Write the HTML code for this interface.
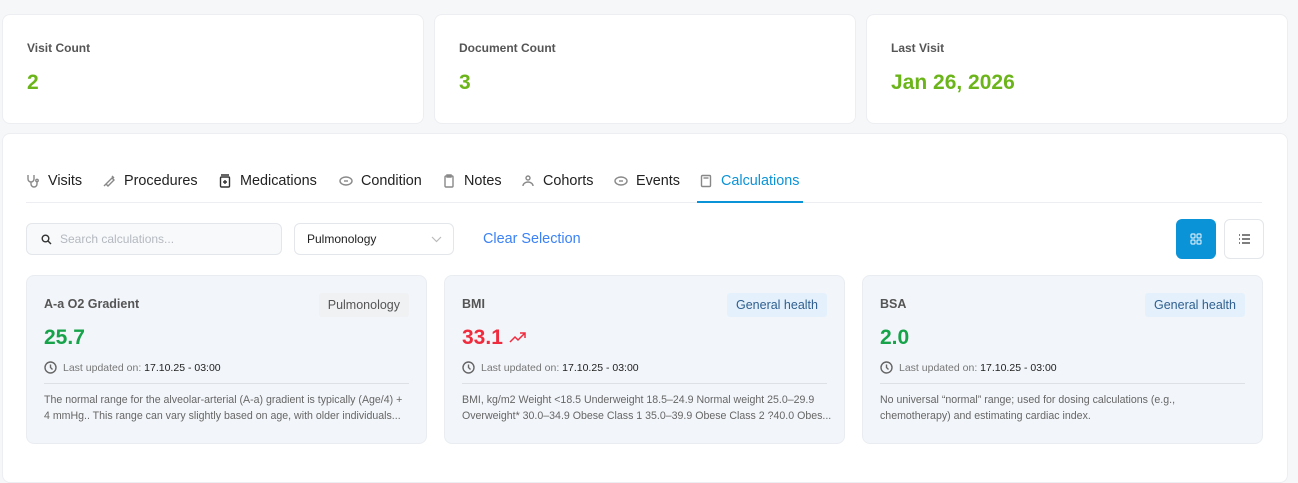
<!DOCTYPE html><html><head><style>
*{box-sizing:border-box;margin:0;padding:0}
body{width:1298px;height:474px;background:#f6f7f9;font-family:"Liberation Sans",sans-serif;position:relative;overflow:hidden;color:#333}
.a{position:absolute}
.top{background:#fff;border:1px solid #eceef1;border-radius:8px;top:14px;height:110px}
.top .l{position:absolute;left:24px;top:26px;font-size:12px;font-weight:bold;color:#555}
.top .v{position:absolute;left:24px;top:56px;font-size:21px;font-weight:bold;color:#6bb51a}
.panel{left:2px;top:133px;width:1286px;height:350px;background:#fff;border:1px solid #eceef1;border-radius:8px}
.tab{top:173px;font-size:14.4px;color:#222;display:flex;align-items:center;gap:8px}
.tab svg{width:14px;height:14px;fill:none;stroke:#888;stroke-width:1.4}
.card{top:275px;height:169px;width:401px;background:#f2f5f9;border-radius:8px;border:1px solid #e9edf2}
.card .t{position:absolute;left:17px;top:21px;font-size:12.5px;font-weight:bold;color:#555}
.card .b{position:absolute;right:17px;top:17px;height:24px;padding:0 9px;line-height:24px;font-size:12.5px;border-radius:3px}
.card .n{position:absolute;left:17px;top:50px;font-size:21px;font-weight:bold;color:#16a34a}
.card .u{position:absolute;left:17px;top:85px;font-size:10.5px;color:#777;display:flex;align-items:center;gap:6px}
.card .u b{font-weight:normal;color:#222}
.card .hr{position:absolute;left:17px;right:17px;top:107px;border-top:1px solid #dde1e6}
.card .d{position:absolute;left:17px;top:116px;font-size:10.6px;line-height:16px;color:#666;white-space:nowrap}
</style></head><body>
<div class="a top" style="left:2px;width:422px"><div class="l">Visit Count</div><div class="v">2</div></div>
<div class="a top" style="left:434px;width:422px"><div class="l">Document Count</div><div class="v">3</div></div>
<div class="a top" style="left:866px;width:422px"><div class="l">Last Visit</div><div class="v">Jan 26, 2026</div></div>
<div class="a panel"></div>
<div class="a tab" style="left:26px"><svg viewBox="0 0 14 14"><path d="M2 1v4a3 3 0 006 0V1M5 8v2a3 3 0 006 0V8"/><circle cx="11" cy="6.5" r="1.2"/></svg>Visits</div>
<div class="a tab" style="left:102px"><svg viewBox="0 0 14 14"><path d="M2 12l3-3M4 10l6-6 2 2-6 6zM10 2l2 2"/></svg>Procedures</div>
<div class="a tab" style="left:218px"><svg viewBox="0 0 14 14" style="stroke:#333"><rect x="2.5" y="3" width="9" height="10" rx="1"/><path d="M3 1h8M7 6v4M5 8h4"/></svg>Medications</div>
<div class="a tab" style="left:339px"><svg viewBox="0 0 14 14"><ellipse cx="7" cy="7" rx="6" ry="4"/><path d="M5 7h4"/></svg>Condition</div>
<div class="a tab" style="left:442px"><svg viewBox="0 0 14 14"><rect x="3" y="2" width="8" height="11" rx="1"/><path d="M5 1h4v2H5z"/></svg>Notes</div>
<div class="a tab" style="left:521px"><svg viewBox="0 0 14 14"><circle cx="7" cy="4" r="2"/><path d="M2 12a5 4 0 0110 0"/></svg>Cohorts</div>
<div class="a tab" style="left:614px"><svg viewBox="0 0 14 14"><ellipse cx="7" cy="7" rx="6" ry="4"/><path d="M5 7h4"/></svg>Events</div>
<div class="a tab" style="left:699px;color:#0b93d8"><svg viewBox="0 0 14 14"><rect x="2.5" y="1.5" width="9" height="11" rx="1"/><path d="M4.5 4h5"/></svg>Calculations</div>
<div class="a" style="left:26px;top:202px;width:1236px;border-top:1px solid #eceef1"></div>
<div class="a" style="left:697px;top:201px;width:106px;height:2px;background:#0b93d8"></div>
<div class="a" style="left:26px;top:223px;width:256px;height:32px;border:1px solid #e3e6ea;border-radius:6px;background:#f7f9fb;font-size:12px;color:#b5b9bf;line-height:30px;padding-left:33px">Search calculations...
<svg class="a" style="left:14px;top:10px" width="11" height="11" viewBox="0 0 11 11" fill="none" stroke="#333" stroke-width="1.4"><circle cx="4.5" cy="4.5" r="3.3"/><path d="M7 7l3 3"/></svg></div>
<div class="a" style="left:294px;top:223px;width:160px;height:32px;border:1px solid #e3e6ea;border-radius:6px;background:#fff;font-size:12px;color:#222;line-height:30px;padding-left:12px">Pulmonology
<svg class="a" style="left:136px;top:12px" width="11" height="7" viewBox="0 0 11 7" fill="none" stroke="#bbb" stroke-width="1.2"><path d="M1 1l4.5 4.5L10 1"/></svg></div>
<div class="a" style="left:483px;top:231px;font-size:14.4px;color:#3b82f6">Clear Selection</div>
<div class="a" style="left:1176px;top:219px;width:40px;height:40px;border-radius:6px;background:#0b93d8"><svg class="a" style="left:14px;top:14px" width="12" height="12" viewBox="0 0 12 12" fill="none" stroke="#cfe9f8" stroke-width="1.2"><rect x="1" y="1" width="4" height="4" rx="1"/><rect x="7" y="1" width="4" height="4" rx="1"/><rect x="1" y="7" width="4" height="4" rx="1"/><rect x="7" y="7" width="4" height="4" rx="1"/></svg></div>
<div class="a" style="left:1224px;top:219px;width:40px;height:40px;border-radius:6px;border:1px solid #e3e6ea;background:#fff"><svg class="a" style="left:13px;top:13px" width="13" height="12" viewBox="0 0 13 12" fill="none" stroke="#333" stroke-width="1.3"><path d="M1 2h1M4 2h8M1 6h1M4 6h8M1 10h1M4 10h8"/></svg></div>

<div class="a card" style="left:26px"><div class="t">A-a O2 Gradient</div><div class="b" style="background:#f0f1f3;color:#555">Pulmonology</div><div class="n">25.7</div>
<div class="u"><svg width="13" height="13" viewBox="0 0 13 13" fill="none" stroke="#666" stroke-width="1.4"><circle cx="6.5" cy="6.5" r="5.5"/><path d="M6.5 3.5v3l2 2"/></svg><span>Last updated on: <b>17.10.25 - 03:00</b></span></div><div class="hr"></div>
<div class="d">The normal range for the alveolar-arterial (A-a) gradient is typically (Age/4) +<br>4 mmHg.. This range can vary slightly based on age, with older individuals...</div></div>

<div class="a card" style="left:444px"><div class="t">BMI</div><div class="b" style="background:#e4f1fc;color:#2f5f8f">General health</div><div class="n" style="color:#ef2b3d">33.1 <svg width="18" height="12" viewBox="0 0 18 12" fill="none" stroke="#ef2b3d" stroke-width="1.5"><path d="M1 10l5-5 3 3 7-7M11 1h5v5"/></svg></div>
<div class="u"><svg width="13" height="13" viewBox="0 0 13 13" fill="none" stroke="#666" stroke-width="1.4"><circle cx="6.5" cy="6.5" r="5.5"/><path d="M6.5 3.5v3l2 2"/></svg><span>Last updated on: <b>17.10.25 - 03:00</b></span></div><div class="hr"></div>
<div class="d">BMI, kg/m2 Weight &lt;18.5 Underweight 18.5–24.9 Normal weight 25.0–29.9<br>Overweight* 30.0–34.9 Obese Class 1 35.0–39.9 Obese Class 2 ?40.0 Obes...</div></div>

<div class="a card" style="left:862px"><div class="t">BSA</div><div class="b" style="background:#e4f1fc;color:#2f5f8f">General health</div><div class="n">2.0</div>
<div class="u"><svg width="13" height="13" viewBox="0 0 13 13" fill="none" stroke="#666" stroke-width="1.4"><circle cx="6.5" cy="6.5" r="5.5"/><path d="M6.5 3.5v3l2 2"/></svg><span>Last updated on: <b>17.10.25 - 03:00</b></span></div><div class="hr"></div>
<div class="d">No universal “normal” range; used for dosing calculations (e.g.,<br>chemotherapy) and estimating cardiac index.</div></div>
</body></html>
